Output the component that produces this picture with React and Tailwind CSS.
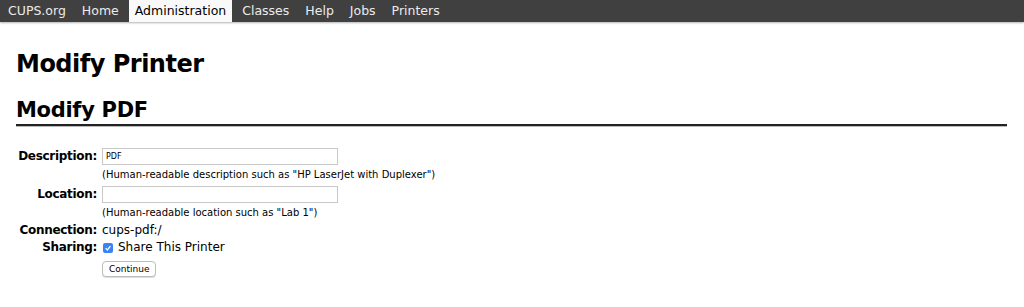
const tabs = ['CUPS.org', 'Home', 'Administration', 'Classes', 'Help', 'Jobs', 'Printers'];

function Field({ label, children }) {
  return (
    <>
      <div className="text-right text-[12px] font-bold leading-[17px] tracking-[-0.3px]">{label}</div>
      <div className="text-[12px] leading-[17px]">{children}</div>
    </>
  );
}

function Hint({ children, last }) {
  return (
    <>
      <div />
      <div className={last ? 'pt-[3px] pb-[2px] text-[10px] leading-[14px]' : 'pt-[3px] pb-[4px] text-[10px] leading-[14px]'}>
        {children}
      </div>
    </>
  );
}

export default function App() {
  return (
    <div className="min-h-[307px] bg-white text-black" style={{ fontFamily: '"DejaVu Sans", "Liberation Sans", sans-serif' }}>
      <nav className="flex h-[22px] gap-[4px] bg-[#404040] pl-[2px] text-[12.5px] leading-[22px] text-[#ececec] shadow-[0_1px_2px_rgba(0,0,0,0.3)]">
        {tabs.map((t) => (
          <span
            key={t}
            className={t === 'Administration' ? 'bg-[#f9f9f9] px-[6px] text-black' : 'px-[6px]'}
          >
            {t}
          </span>
        ))}
      </nav>

      <main className="px-[16px]">
        <h1 className="mt-[26px] text-[24px] font-bold leading-[32px] tracking-[-0.5px]">Modify Printer</h1>
        <h2 className="mr-[1px] mt-[17px] border-b-2 border-[#222] text-[21px] font-bold leading-[27px] tracking-[-0.3px] shadow-[0_1px_0_#bbb]">
          Modify PDF
        </h2>

        <div className="mt-[22px] grid grid-cols-[81px_auto] items-center gap-x-[5px]">
          <Field label="Description:">
            <input
              defaultValue="PDF"
              className="block h-[17px] w-[236px] border border-[#c8c8c8] px-[3px] text-[8px] outline-none"
            />
          </Field>
          <Hint>(Human-readable description such as "HP LaserJet with Duplexer")</Hint>
          <Field label="Location:">
            <input className="block h-[17px] w-[236px] border border-[#c8c8c8] px-[3px] text-[8px] outline-none" />
          </Field>
          <Hint last>(Human-readable location such as "Lab 1")</Hint>
          <Field label="Connection:">cups-pdf:/</Field>
          <Field label="Sharing:">
            <label className="flex items-center gap-[5px] pl-[1px]">
              <span className="inline-flex h-[10px] w-[10px] items-center justify-center rounded-[2px] bg-[#3b82f6]">
                <svg viewBox="0 0 10 10" className="h-[8px] w-[8px]">
                  <path d="M2 5.2 L4.2 7.4 L8 2.6" fill="none" stroke="white" strokeWidth="1.6" />
                </svg>
              </span>
              Share This Printer
            </label>
          </Field>
          <div />
          <div className="pt-[5px]">
            <button className="block h-[16px] rounded-[4px] border border-[#bdbdbd] bg-white px-[6px] text-[9px] leading-[14px] shadow-[0_1px_0_#ddd]">
              Continue
            </button>
          </div>
        </div>
      </main>
    </div>
  );
}
